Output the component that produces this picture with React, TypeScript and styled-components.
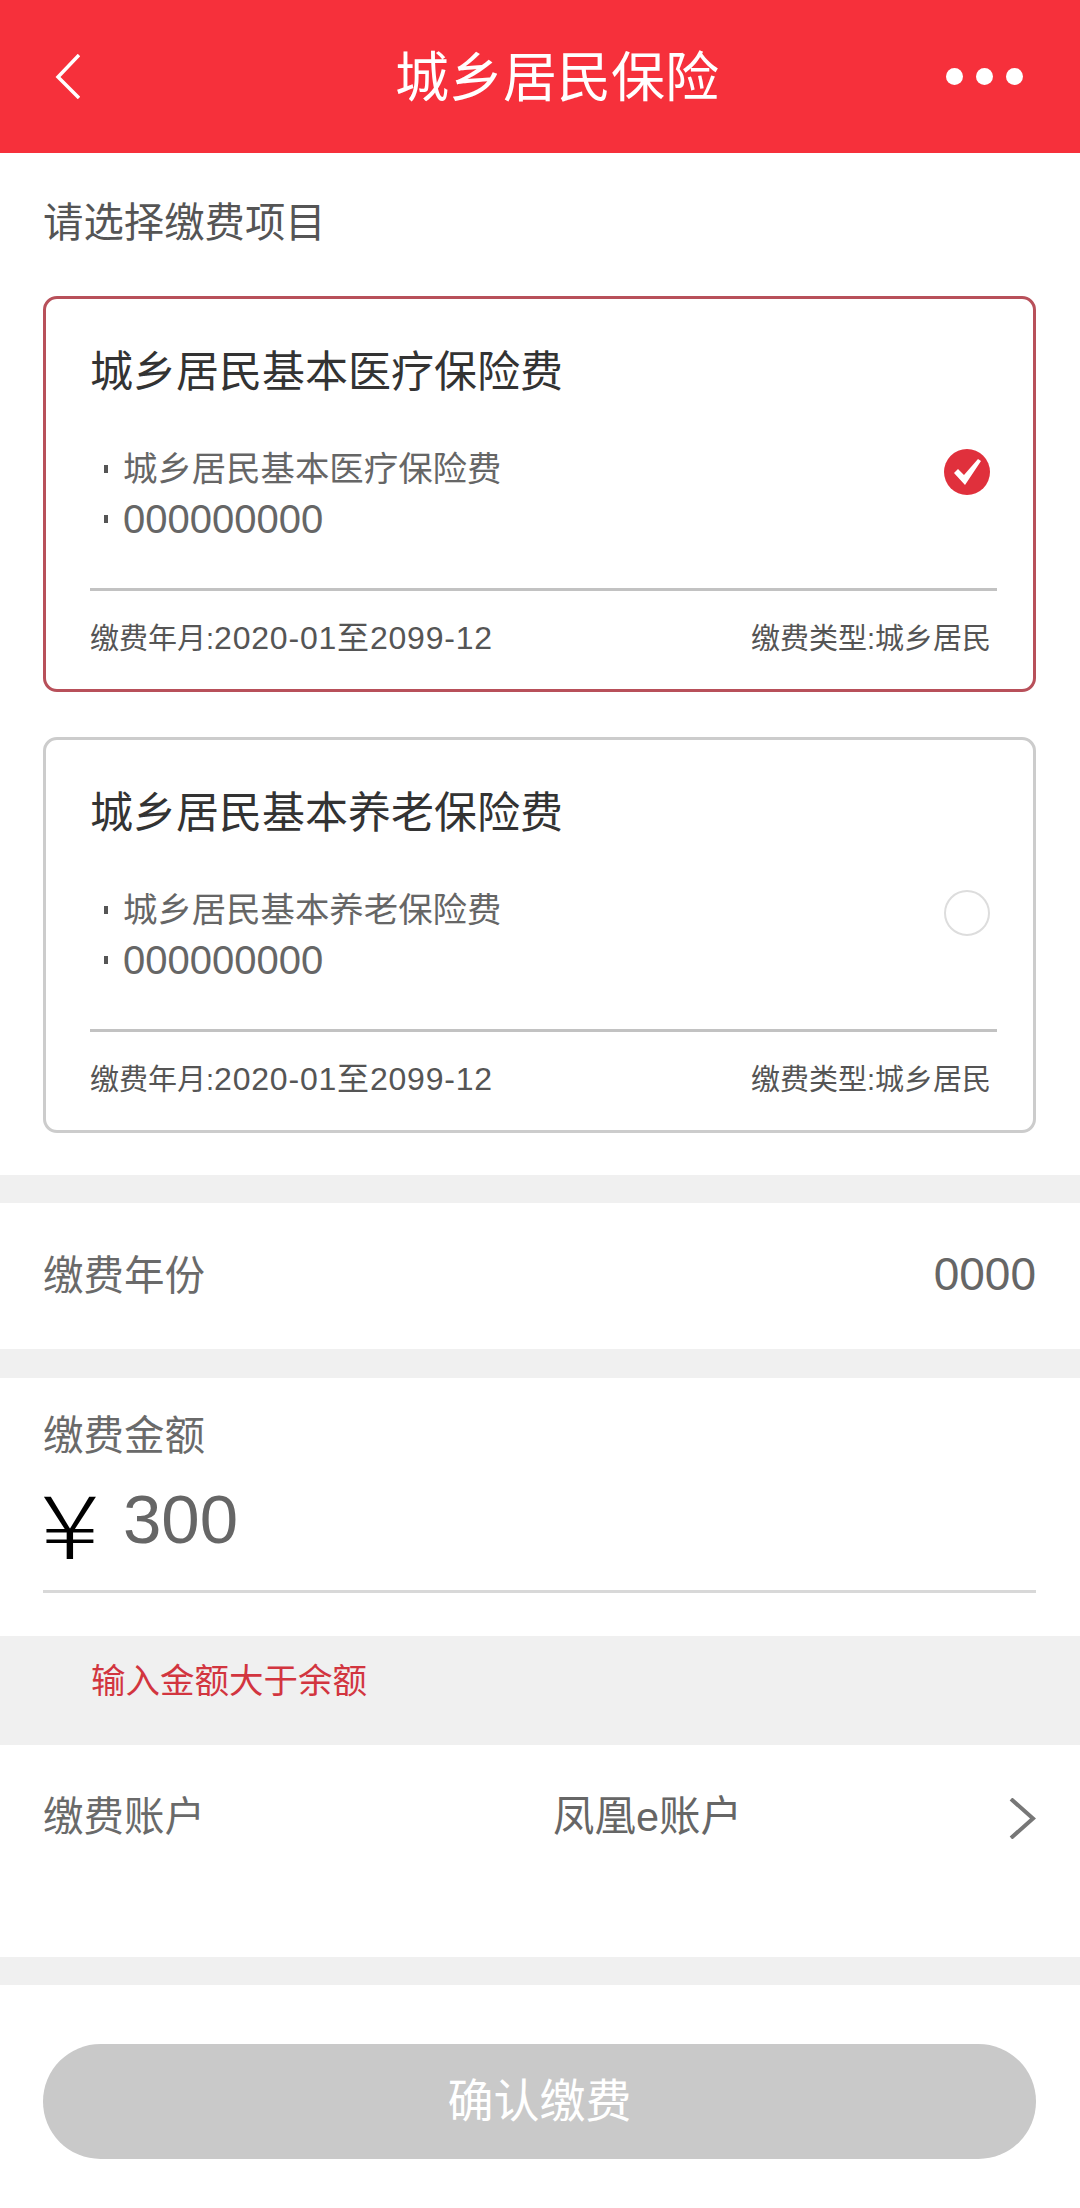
import React from 'react';
import styled, { createGlobalStyle } from 'styled-components';

const GlobalStyle = createGlobalStyle`
  html, body {
    margin: 0;
    padding: 0;
    background: #ffffff;
  }
  * {
    box-sizing: border-box;
  }
`;

const Page = styled.div`
  width: 1080px;
  height: 2208px;
  overflow: hidden;
  background: #ffffff;
  font-family: 'Liberation Sans', 'Noto Sans CJK SC', sans-serif;
  color: #666666;
`;

const Header = styled.header`
  height: 153px;
  padding: 0 57px 0 55px;
  background: #f6303b;
  display: grid;
  grid-template-columns: 340px auto 1fr;
  align-items: center;
`;

const BackIcon = styled.svg`
  width: 25px;
  height: 45px;
  fill: none;
  stroke: #ffffff;
  stroke-width: 3.5;
`;

const HeaderTitle = styled.h1`
  margin: 2px 0 0;
  font-size: 54px;
  line-height: 60px;
  font-weight: 400;
  color: #ffffff;
`;

const Dots = styled.div`
  justify-self: end;
  display: flex;
  gap: 13px;
`;

const Dot = styled.span`
  width: 17px;
  height: 17px;
  border-radius: 50%;
  background: #ffffff;
`;

const ProjectSection = styled.section`
  height: 1022px;
  padding: 50px 44px 0 43px;
`;

const SectionLabel = styled.div`
  font-size: 40.4px;
  line-height: 40px;
  color: #555555;
`;

const CardList = styled.div`
  margin-top: 53px;
  display: flex;
  flex-direction: column;
  gap: 45px;
`;

const Card = styled.div<{ $selected?: boolean }>`
  height: 396px;
  padding: 48px 36px 0 44px;
  border: 3px solid ${(p) => (p.$selected ? '#b8505a' : '#cccccc')};
  border-radius: 14px;
`;

const CardTitle = styled.div`
  font-size: 43px;
  line-height: 50px;
  color: #333333;
`;

const CardBody = styled.div`
  margin-top: 52px;
  height: 142px;
  padding-right: 7px;
  display: flex;
  justify-content: space-between;
  align-items: flex-start;
  border-bottom: 3px solid #c2c2c2;
`;

const DetailList = styled.ul`
  margin: 0;
  padding: 0 0 0 14px;
  list-style: none;
  display: flex;
  flex-direction: column;
  gap: 10px;
`;

const DetailItem = styled.li<{ $numeric?: boolean }>`
  font-size: ${(p) => (p.$numeric ? 40 : 34.4)}px;
  line-height: 40px;
  color: #666666;
  display: flex;
  align-items: center;
  gap: 15px;
`;

const Bullet = styled.span`
  width: 4px;
  height: 8px;
  background: #555555;
`;

const CheckMark = styled.svg`
  width: 46px;
  height: 46px;
  flex-shrink: 0;
`;

const CardFooter = styled.div`
  margin-top: 29px;
  padding-right: 6px;
  display: flex;
  justify-content: space-between;
  align-items: baseline;
  font-size: 29px;
  line-height: 36px;
  color: #555555;
`;

const PeriodValue = styled.span`
  font-size: 32px;
  letter-spacing: 0.8px;
`;

const Band = styled.div<{ $height: number }>`
  height: ${(p) => p.$height}px;
  background: #f0f0f0;
`;

const YearRow = styled.div`
  height: 146px;
  padding: 0 44px 0 43px;
  display: flex;
  justify-content: space-between;
  align-items: center;
`;

const RowLabel = styled.span`
  font-size: 40.5px;
  line-height: 44px;
  color: #6a6a6a;
`;

const YearValue = styled.span`
  margin-top: -5px;
  font-size: 46px;
  line-height: 44px;
  color: #666666;
`;

const AmountSection = styled.section`
  height: 258px;
  padding: 36px 44px 0 43px;
`;

const AmountLine = styled.div`
  height: 126px;
  margin-top: 9px;
  border-bottom: 3px solid #d8d8d8;
  display: flex;
  align-items: flex-start;
  gap: 26px;
`;

const YenSign = styled.span`
  width: 54px;
  margin-top: 4px;
  font-size: 88px;
  line-height: 100px;
  color: #000000;
  font-family: 'Noto Sans CJK SC', sans-serif;
  font-weight: 300;
  text-align: center;
  transform: scaleX(1.25);
`;

const AmountValue = styled.span`
  margin-top: 12px;
  font-size: 69px;
  line-height: 82px;
  color: #666666;
`;

const ErrorBand = styled.div`
  height: 109px;
  padding: 25px 0 0 91px;
  background: #f0f0f0;
  font-size: 34.5px;
  line-height: 40px;
  color: #d2353f;
`;

const AccountRow = styled.div`
  height: 212px;
  padding: 50px 44px 0 43px;
  display: grid;
  grid-template-columns: 510px 1fr auto;
  align-items: start;
`;

const AccountValue = styled.span`
  font-size: 41.5px;
  line-height: 44px;
  color: #666666;
`;

const ForwardIcon = styled.svg`
  width: 27px;
  height: 41px;
  margin-top: 3px;
  fill: none;
  stroke: #777777;
  stroke-width: 4;
`;

const Footer = styled.div`
  padding: 59px 44px 0 43px;
`;

const ConfirmButton = styled.button`
  width: 100%;
  height: 115px;
  padding: 0 0 9px;
  border: none;
  border-radius: 58px;
  background: #c9c9c9;
  color: #ffffff;
  font-family: inherit;
  font-size: 46px;
`;

const projects = [
  { name: '城乡居民基本医疗保险费', selected: true },
  { name: '城乡居民基本养老保险费', selected: false },
];

const App = () => {
  return (
    <Page>
      <GlobalStyle />
      <Header>
        <BackIcon viewBox="0 0 25 45">
          <path d="M24 1 L3 23 L24 44" />
        </BackIcon>
        <HeaderTitle>城乡居民保险</HeaderTitle>
        <Dots>
          <Dot />
          <Dot />
          <Dot />
        </Dots>
      </Header>

      <ProjectSection>
        <SectionLabel>请选择缴费项目</SectionLabel>
        <CardList>
          {projects.map((project) => (
            <Card key={project.name} $selected={project.selected}>
              <CardTitle>{project.name}</CardTitle>
              <CardBody>
                <DetailList>
                  <DetailItem>
                    <Bullet />
                    {project.name}
                  </DetailItem>
                  <DetailItem $numeric>
                    <Bullet />
                    000000000
                  </DetailItem>
                </DetailList>
                <CheckMark viewBox="0 0 46 46">
                  {project.selected ? (
                    <>
                      <circle cx="23" cy="23" r="23" fill="#e0303c" />
                      <path d="M10 24 L14 20 L20 26 L34 10 L37 12 L21 36 Z" fill="#ffffff" />
                    </>
                  ) : (
                    <circle cx="23" cy="23" r="22" fill="none" stroke="#dddddd" strokeWidth="2" />
                  )}
                </CheckMark>
              </CardBody>
              <CardFooter>
                <span>
                  缴费年月:<PeriodValue>2020-01至2099-12</PeriodValue>
                </span>
                <span>缴费类型:城乡居民</span>
              </CardFooter>
            </Card>
          ))}
        </CardList>
      </ProjectSection>

      <Band $height={28} />
      <YearRow>
        <RowLabel>缴费年份</RowLabel>
        <YearValue>0000</YearValue>
      </YearRow>
      <Band $height={29} />

      <AmountSection>
        <RowLabel>缴费金额</RowLabel>
        <AmountLine>
          <YenSign>¥</YenSign>
          <AmountValue>300</AmountValue>
        </AmountLine>
      </AmountSection>

      <ErrorBand>输入金额大于余额</ErrorBand>

      <AccountRow>
        <RowLabel>缴费账户</RowLabel>
        <AccountValue>凤凰e账户</AccountValue>
        <ForwardIcon viewBox="0 0 27 41">
          <path d="M2 1 L24 20.5 L2 40" />
        </ForwardIcon>
      </AccountRow>
      <Band $height={28} />

      <Footer>
        <ConfirmButton>确认缴费</ConfirmButton>
      </Footer>
    </Page>
  );
};

export default App;
